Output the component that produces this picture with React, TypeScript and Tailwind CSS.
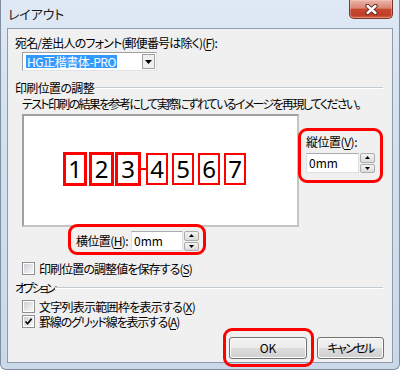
import React from 'react';

const jp = "font-['Noto_Sans_CJK_JP',sans-serif] [font-feature-settings:'palt']";

// squeezes/stretches a line of text to the width it has in the original dialog
const Fit = ({ w, children, className = '' }: { w: number; children: React.ReactNode; className?: string }) => {
  const ref = React.useRef<HTMLSpanElement>(null);
  React.useLayoutEffect(() => {
    const measure = () => {
      const el = ref.current;
      if (!el) return;
      el.style.letterSpacing = '0px';
      const natural = el.getBoundingClientRect().width;
      const n = (el.textContent || '').length;
      el.style.letterSpacing = `${n ? (w - natural) / n : 0}px`;
    };
    measure();
    document.fonts?.ready.then(measure);
  }, [w]);
  return (
    <span ref={ref} className={`inline-block whitespace-nowrap ${className}`}>
      {children}
    </span>
  );
};

const U = ({ children }: { children: React.ReactNode }) => (
  <span className="underline decoration-1 underline-offset-[2px]">{children}</span>
);

const CloseButton = () => (
  <div className="mr-[6px] flex h-[19px] w-[44px] items-center justify-center rounded-b-[5px] border border-t-0 border-[#7c3429] bg-[linear-gradient(#ebb4a9,#da8473_45%,#c6472f_52%,#c13e28_85%,#d5654b)] shadow-[inset_0_0_0_1px_rgba(255,220,210,0.35)]">
    <svg width="13" height="11" viewBox="0 0 13 11">
      <path d="M2.5 2 L10.5 9 M10.5 2 L2.5 9" stroke="#5a2118" strokeWidth="4.2" strokeLinecap="round" />
      <path d="M2.5 2 L10.5 9 M10.5 2 L2.5 9" stroke="#ffffff" strokeWidth="2.4" strokeLinecap="round" />
    </svg>
  </div>
);

const SpinBox = ({ w }: { w: string }) => (
  <div className="flex items-start">
    <div className={`flex h-[20px] ${w} items-center border border-[#dbdfe6] border-t-[#abadb3] bg-white pl-[2px] leading-[16px]`}>
      0mm
    </div>
    <div className="ml-[1px] flex h-[20px] w-[15px] flex-col gap-[1px]">
      <div className="flex h-[9.5px] items-center justify-center rounded-[2px] border border-[#acacac] bg-[linear-gradient(#f4f4f4,#dcdcdc)]">
        <svg width="5" height="3" viewBox="0 0 5 3">
          <path d="M2.5 0 L5 3 H0 Z" fill="#000" />
        </svg>
      </div>
      <div className="flex h-[9.5px] items-center justify-center rounded-[2px] border border-[#acacac] bg-[linear-gradient(#f4f4f4,#dcdcdc)]">
        <svg width="5" height="3" viewBox="0 0 5 3">
          <path d="M0 0 H5 L2.5 3 Z" fill="#000" />
        </svg>
      </div>
    </div>
  </div>
);

const Check = ({ checked }: { checked?: boolean }) => (
  <span className="flex h-[13px] w-[13px] shrink-0 border border-[#8e8f8f] bg-white p-[1px]">
    <span className="flex h-full w-full items-center justify-center bg-[linear-gradient(135deg,#cfd2d6,#f7f7f7)]">
      {checked && (
        <svg width="9" height="9" viewBox="0 0 9 9">
          <path d="M1.5 4.5 L3.6 6.8 L7.6 1.8" stroke="#000" strokeWidth="1.7" fill="none" />
        </svg>
      )}
    </span>
  </span>
);

const CheckRow = ({ checked, w, className, children }: { checked?: boolean; w: number; className: string; children: React.ReactNode }) => (
  <div className={`ml-[14px] flex h-[13px] items-center ${className}`}>
    <Check checked={checked} />
    <Fit w={w} className="ml-[4px] leading-[14px]">
      {children}
    </Fit>
  </div>
);

const GroupHeader = ({ label, w, className }: { label: string; w: number; className: string }) => (
  <div className={`flex h-[16px] items-center pl-[7px] pr-[9px] ${className}`}>
    <Fit w={w}>{label}</Fit>
    <div className="ml-[1px] h-[2px] flex-1 border-t border-[#c2cad2] border-b border-b-white" />
  </div>
);

const DigitBox = ({ n, thick, className = '' }: { n: string; thick?: boolean; className?: string }) => (
  <div
    className={`flex items-center justify-center border-[#ff0000] font-['Noto_Sans',sans-serif] text-[24px] leading-none ${
      thick ? 'h-[34px] border-[3px]' : 'h-[32px] w-[22px] border-2'
    } ${className}`}
  >
    {n}
  </div>
);

const btn =
  'h-[22px] rounded-[3px] border border-[#707070] bg-[linear-gradient(#f2f2f2,#ebebeb_50%,#dddddd_50%,#cfcfcf)] leading-[16px] shadow-[inset_0_0_0_1px_#fbfbfb]';

export default function App() {
  return (
    <div className={`h-[373px] w-[400px] bg-white text-[12px] leading-[16px] text-black ${jp}`}>
      <div className="flex h-[370px] w-[400px] flex-col rounded-b-[6px] border-x border-b border-[#7f8ea0] bg-[linear-gradient(to_bottom,#dfe9f5,#d4e1ef_30%,#cad8ea)]">
        {/* title bar */}
        <div className="flex h-[28px] shrink-0 items-start justify-between">
          <Fit w={56} className="ml-[7px] mt-[6px] text-[13px] leading-[16px] text-[#1a1a1a]">
            レイアウト
          </Fit>
          <CloseButton />
        </div>

        {/* client area */}
        <div className="mx-[6px] h-[335px] shrink-0 border border-[#8d9bad] bg-[#f0f0f0]">
          <div className="ml-[7px] mt-[6px] h-[16px]">
            <Fit w={202}>
              宛名/差出人のフォント(郵便番号は除く)(<U>F</U>):
            </Fit>
          </div>

          <div className="ml-[14px] mt-[1px] flex h-[19px] w-[135px] items-center border border-[#a0a0a0] border-b-[#e3e3e3] border-r-[#e3e3e3] bg-white">
            <span className="ml-[3px] bg-[#3399ff] px-[1px] leading-[13px] text-white">
              <Fit w={89}>HG正楷書体-PRO</Fit>
            </span>
            <div className="ml-auto mr-[1px] flex h-[15px] w-[13px] items-center justify-center border border-[#a0a0a0] bg-[#f0f0f0]">
              <svg width="7" height="4" viewBox="0 0 7 4">
                <path d="M0 0 H7 L3.5 4 Z" fill="#000" />
              </svg>
            </div>
          </div>

          <GroupHeader label="印刷位置の調整" w={79} className="mt-[9px]" />

          <div className="ml-[14px] h-[16px]">
            <Fit w={338}>テスト印刷の結果を参考にして実際にずれているイメージを再現してください。</Fit>
          </div>

          <div className="mt-[2px] flex items-start">
            {/* preview */}
            <div className="ml-[14px] h-[113px] w-[277px] border-2 border-[#a0a0a0] border-b-[#c4c4c4] border-r-[#c4c4c4] bg-white">
              <div className="mt-[36px] flex items-center pl-[39px]">
                <DigitBox n="1" thick className="w-[24px]" />
                <DigitBox n="2" thick className="ml-[2px] w-[25px]" />
                <DigitBox n="3" thick className="ml-[1px] w-[26px]" />
                <div className="h-[2px] w-[5px] bg-[#ff0000]" />
                <DigitBox n="4" />
                <DigitBox n="5" className="ml-[4px]" />
                <DigitBox n="6" className="ml-[4px]" />
                <DigitBox n="7" className="ml-[4px]" />
              </div>
            </div>

            {/* vertical position */}
            <div className="relative -ml-[1px] mt-[14px] h-[55px] w-[85px] rounded-[9px] border-[3px] border-[#ff0000] pl-[5px] pt-[3px]">
              <div className="h-[16px]">
                <Fit w={51}>
                  縦位置(<U>V</U>):
                </Fit>
              </div>
              <div className="mt-[3px]">
                <SpinBox w="w-[53px]" />
              </div>
            </div>
          </div>

          {/* horizontal position */}
          <div className="relative -mt-[3px] ml-[60px] flex h-[31px] w-[138px] items-start rounded-[9px] border-[3px] border-[#ff0000] pl-[5px] pt-[4px]">
            <div className="h-[20px] w-[55px] shrink-0 leading-[20px]">
              <Fit w={52}>
                横位置(<U>H</U>):
              </Fit>
            </div>
            <SpinBox w="w-[52px]" />
          </div>

          <CheckRow w={153} className="mt-[7px]">
            印刷位置の調整値を保存する(<U>S</U>)
          </CheckRow>

          <GroupHeader label="オプション" w={39} className="mt-[5px]" />

          <CheckRow w={156} className="mt-[4px]">
            文字列表示範囲枠を表示する(<U>X</U>)
          </CheckRow>
          <CheckRow checked w={140} className="mt-[2px]">
            罫線のグリッド線を表示する(<U>A</U>)
          </CheckRow>

          <div className="flex items-start">
            <div className="relative ml-[215px] h-[39px] w-[91px] rounded-[9px] border-[3px] border-[#ff0000] pl-[3px] pt-[6px]">
              <button className={`${btn} w-[78px]`}>OK</button>
            </div>
            <button className={`${btn} ml-[3px] mt-[9px] w-[67px]`}>
              <Fit w={46}>キャンセル</Fit>
            </button>
          </div>
        </div>
      </div>
    </div>
  );
}
